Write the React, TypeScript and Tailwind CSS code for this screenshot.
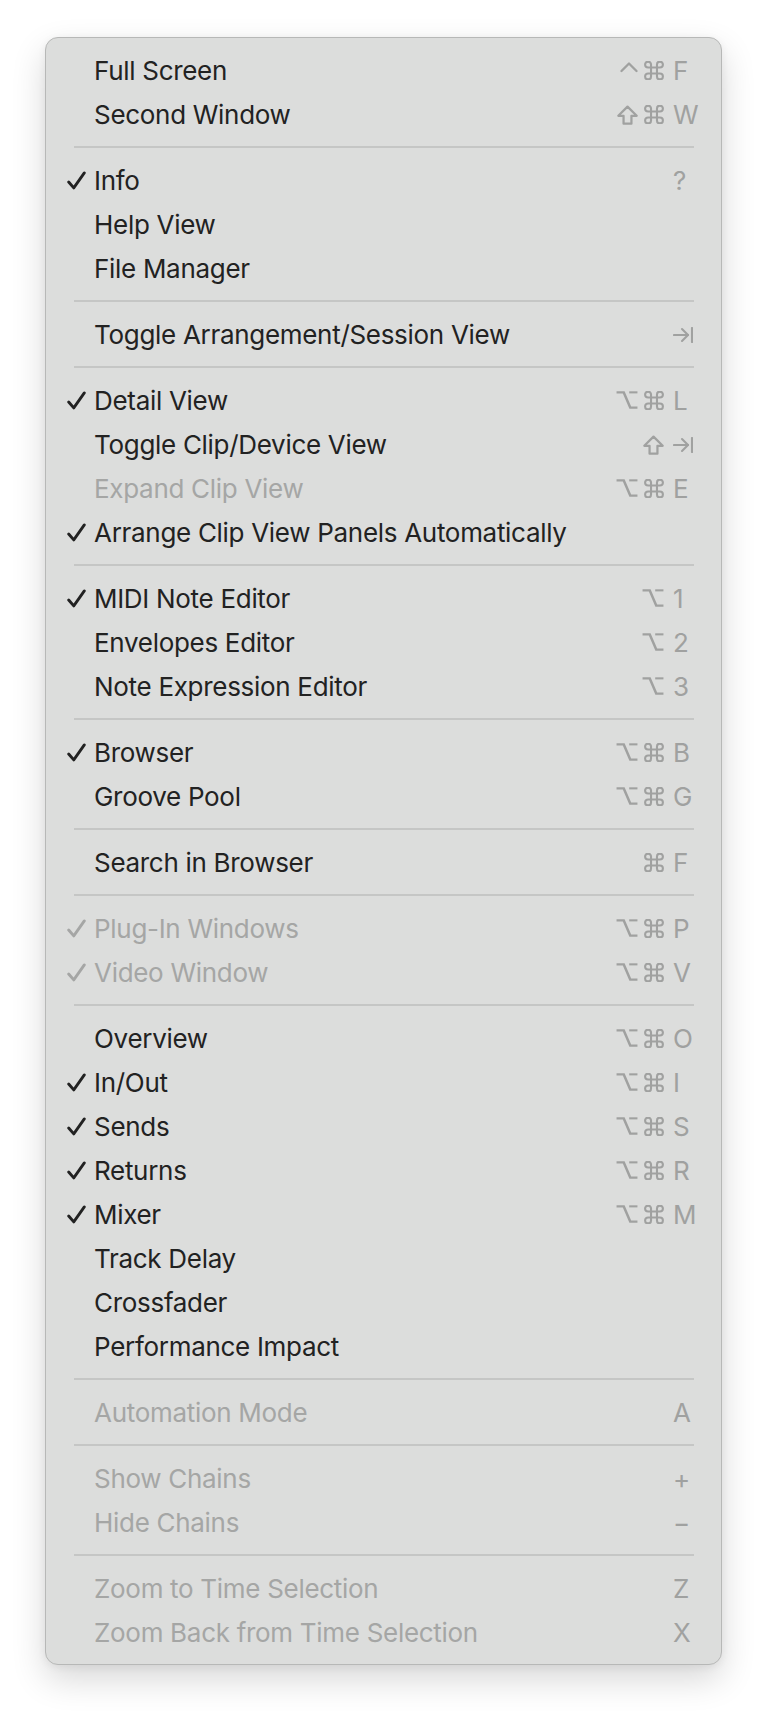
import type { ReactNode } from 'react';

type Mod = 'cmd' | 'opt' | 'shift' | 'ctrl';

type Item = {
  label: string;
  checked?: boolean;
  disabled?: boolean;
  mods?: Mod[];
  keyName?: string;
  tab?: boolean;
};

const sections: Item[][] = [
  [
    { label: 'Full Screen', mods: ['ctrl', 'cmd'], keyName: 'F' },
    { label: 'Second Window', mods: ['shift', 'cmd'], keyName: 'W' },
  ],
  [
    { label: 'Info', checked: true, keyName: '?' },
    { label: 'Help View' },
    { label: 'File Manager' },
  ],
  [{ label: 'Toggle Arrangement/Session View', tab: true }],
  [
    { label: 'Detail View', checked: true, mods: ['opt', 'cmd'], keyName: 'L' },
    { label: 'Toggle Clip/Device View', mods: ['shift'], tab: true },
    { label: 'Expand Clip View', disabled: true, mods: ['opt', 'cmd'], keyName: 'E' },
    { label: 'Arrange Clip View Panels Automatically', checked: true },
  ],
  [
    { label: 'MIDI Note Editor', checked: true, mods: ['opt'], keyName: '1' },
    { label: 'Envelopes Editor', mods: ['opt'], keyName: '2' },
    { label: 'Note Expression Editor', mods: ['opt'], keyName: '3' },
  ],
  [
    { label: 'Browser', checked: true, mods: ['opt', 'cmd'], keyName: 'B' },
    { label: 'Groove Pool', mods: ['opt', 'cmd'], keyName: 'G' },
  ],
  [{ label: 'Search in Browser', mods: ['cmd'], keyName: 'F' }],
  [
    { label: 'Plug-In Windows', checked: true, disabled: true, mods: ['opt', 'cmd'], keyName: 'P' },
    { label: 'Video Window', checked: true, disabled: true, mods: ['opt', 'cmd'], keyName: 'V' },
  ],
  [
    { label: 'Overview', mods: ['opt', 'cmd'], keyName: 'O' },
    { label: 'In/Out', checked: true, mods: ['opt', 'cmd'], keyName: 'I' },
    { label: 'Sends', checked: true, mods: ['opt', 'cmd'], keyName: 'S' },
    { label: 'Returns', checked: true, mods: ['opt', 'cmd'], keyName: 'R' },
    { label: 'Mixer', checked: true, mods: ['opt', 'cmd'], keyName: 'M' },
    { label: 'Track Delay' },
    { label: 'Crossfader' },
    { label: 'Performance Impact' },
  ],
  [{ label: 'Automation Mode', disabled: true, keyName: 'A' }],
  [
    { label: 'Show Chains', disabled: true, keyName: '+' },
    { label: 'Hide Chains', disabled: true, keyName: '−' },
  ],
  [
    { label: 'Zoom to Time Selection', disabled: true, keyName: 'Z' },
    { label: 'Zoom Back from Time Selection', disabled: true, keyName: 'X' },
  ],
];

const CheckMark = () => (
  <svg width="19" height="19" viewBox="0 0 18 18" fill="none" stroke="currentColor" strokeWidth="2.7" strokeLinecap="round" strokeLinejoin="round">
    <path d="M1.6 10.4 6.4 16 16.4 1.8" />
  </svg>
);

const modIcon: Record<Mod, ReactNode> = {
  cmd: (
    <svg width="20" height="19" viewBox="2.4 2.4 19.2 19.2" fill="none" stroke="currentColor" strokeWidth="2.1">
      <path d="M15 6v12a3 3 0 1 0 3-3H6a3 3 0 1 0 3 3V6a3 3 0 1 0-3 3h12a3 3 0 1 0-3-3" />
    </svg>
  ),
  opt: (
    <svg width="22" height="18" viewBox="2 2 20 20" fill="none" stroke="currentColor" strokeWidth="2.3" preserveAspectRatio="none">
      <path d="M2.5 3.5h6.5l6 17h6.5" />
      <path d="M14 3.5h7.5" />
    </svg>
  ),
  shift: (
    <svg width="21" height="21" viewBox="4 4 16 16" fill="none" stroke="currentColor" strokeWidth="1.7" strokeLinejoin="round">
      <path d="M9 19v-6H5l7-7 7 7h-4v6H9z" />
    </svg>
  ),
  ctrl: (
    <svg width="18" height="19" viewBox="0 0 18 19" fill="none" stroke="currentColor" strokeWidth="2.3" strokeLinecap="round" strokeLinejoin="round">
      <path d="M1.5 10 9 2.5 16.5 10" />
    </svg>
  ),
};

const TabIcon = () => (
  <svg width="20" height="16" viewBox="2 4 20 16" fill="none" stroke="currentColor" strokeWidth="2.1" strokeLinecap="round" strokeLinejoin="round">
    <path d="M17 12H3" />
    <path d="m11 18 6-6-6-6" />
    <path d="M21 5v14" />
  </svg>
);

const Row = ({ item }: { item: Item }) => {
  const text = item.disabled ? 'text-[#a5a6a5]' : 'text-[#222222]';
  return (
    <div className="flex h-[44px] items-center pl-[21px] pr-[22px]">
      <div className={`flex w-[27px] items-center ${text}`}>{item.checked && <CheckMark />}</div>
      <div className={`flex-1 whitespace-nowrap pt-[2px] text-[26px] leading-none tracking-[-0.3px] ${text}`}>
        {item.label}
      </div>
      <div className="flex items-center gap-[6px] text-[#a0a1a0]">
        {item.mods?.map((m, i) => (
          <span key={i} className="flex items-center">
            {modIcon[m]}
          </span>
        ))}
      </div>
      <div className="ml-[9px] flex w-[26px] items-center pt-[2px] text-[26px] leading-none text-[#a0a1a0]">
        {item.tab ? <TabIcon /> : item.keyName}
      </div>
    </div>
  );
};

export default function App() {
  return (
    <div className="min-h-screen bg-white pl-[45px] pt-[37px]" style={{ fontFamily: 'Inter, "Noto Sans", sans-serif' }}>
      <div className="w-[677px] rounded-[13px] border border-[#b7b8b7] bg-[#dcdddc] py-[10px] shadow-[0_14px_34px_rgba(0,0,0,0.16),0_2px_8px_rgba(0,0,0,0.06)]">
        {sections.map((sec, si) => (
          <div key={si}>
            {si > 0 && (
              <div className="flex h-[22px] items-center pl-[28px] pr-[27px]">
                <div className="h-[2px] w-full bg-[#c5c6c5]" />
              </div>
            )}
            {sec.map((item) => (
              <Row key={item.label} item={item} />
            ))}
          </div>
        ))}
      </div>
    </div>
  );
}
